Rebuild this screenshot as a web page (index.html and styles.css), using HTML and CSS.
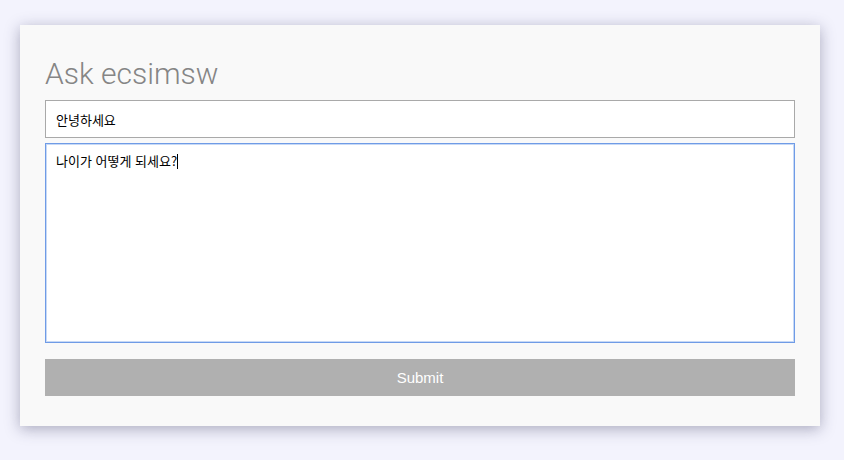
FILE: index.html
```html
<!DOCTYPE html>
<html lang="ko">
<head>
<meta charset="utf-8">
<title>Ask ecsimsw</title>
<link rel="stylesheet" href="styles.css">
</head>
<body>
<main class="card">
  <h1 class="title">Ask ecsimsw</h1>
  <form class="form">
    <input class="field" type="text" value="안녕하세요">
    <div class="area" role="textbox" aria-multiline="true">나이가 어떻게 되세요?<span class="caret"></span></div>
    <button class="submit" type="button">Submit</button>
  </form>
</main>
</body>
</html>
```
FILE: styles.css
```css
html, body {
  margin: 0;
  padding: 0;
}
body {
  background: #f3f3fd;
  font-family: "Noto Sans CJK KR", "Noto Sans", sans-serif;
  height: 460px;
  overflow: hidden;
}
.card {
  box-sizing: border-box;
  width: 800px;
  margin: 25px 0 0 20px;
  padding: 31px 25px 30px;
  background: #f9f9f9;
  box-shadow: 0 3px 14px rgba(50, 50, 90, 0.38);
}
.title {
  margin: 0 0 9px;
  font-family: Roboto, "Liberation Sans", sans-serif;
  font-weight: 300;
  font-size: 30px;
  line-height: 35px;
  color: #858585;
}
.form {
  display: flex;
  flex-direction: column;
  margin: 0;
}
.field {
  box-sizing: border-box;
  height: 38px;
  width: 100%;
  margin: 0;
  padding: 0 10px;
  border: 1px solid #a9a9a9;
  background: #fff;
  font-family: "Noto Sans CJK KR", sans-serif;
  font-size: 13px;
  color: #000;
  outline: none;
}
.area {
  box-sizing: border-box;
  height: 200px;
  margin-top: 5px;
  padding: 8px 10px;
  border: 1px solid #6f9be6;
  box-shadow: inset 0 0 0 1px rgba(130, 170, 235, 0.45);
  background: #fff;
  font-family: "Noto Sans CJK KR", sans-serif;
  font-size: 13px;
  line-height: 18px;
  color: #000;
}
.caret {
  display: inline-block;
  width: 0;
  height: 15px;
  border-left: 1px solid #000;
  vertical-align: -3px;
}
.submit {
  height: 37px;
  margin-top: 16px;
  border: 0;
  background: #b0b0b0;
  color: #fff;
  font-family: "Liberation Sans", Arial, sans-serif;
  font-size: 15px;
  padding: 0;
}
```
